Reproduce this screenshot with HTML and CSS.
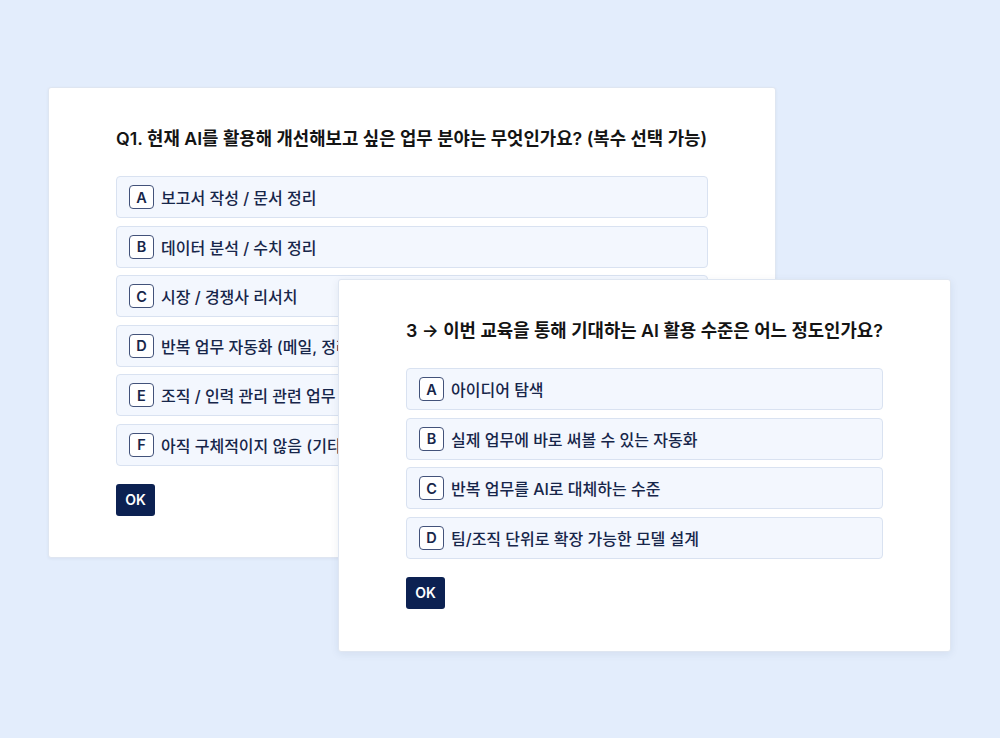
FILE: index.html
```html
<!DOCTYPE html>
<html lang="ko">
<head>
  <meta charset="UTF-8">
  <meta name="viewport" content="width=device-width, initial-scale=1.0">
  <title>AI 교육 사전 설문</title>
  <link rel="stylesheet" href="styles.css">
</head>
<body>
  <div class="stage">
    <!-- 첫 번째 설문 카드 -->
    <div class="card card-back">
      <h2 class="question">Q1. 현재 AI를 활용해 개선해보고 싶은 업무 분야는 무엇인가요? (복수 선택 가능)</h2>
      <div class="options">
        <div class="option"><span class="key">A</span> 보고서 작성 / 문서 정리</div>
        <div class="option"><span class="key">B</span> 데이터 분석 / 수치 정리</div>
        <div class="option"><span class="key">C</span> 시장 / 경쟁사 리서치</div>
        <div class="option"><span class="key">D</span> 반복 업무 자동화 (메일, 정리, 보고 등)</div>
        <div class="option"><span class="key">E</span> 조직 / 인력 관리 관련 업무</div>
        <div class="option"><span class="key">F</span> 아직 구체적이지 않음 (기타)</div>
      </div>
      <button class="ok-btn">OK</button>
    </div>

    <!-- 두 번째 설문 카드 -->
    <div class="card card-front">
      <h2 class="question">3 → 이번 교육을 통해 기대하는 AI 활용 수준은 어느 정도인가요?</h2>
      <div class="options">
        <div class="option"><span class="key">A</span> 아이디어 탐색</div>
        <div class="option"><span class="key">B</span> 실제 업무에 바로 써볼 수 있는 자동화</div>
        <div class="option"><span class="key">C</span> 반복 업무를 AI로 대체하는 수준</div>
        <div class="option"><span class="key">D</span> 팀/조직 단위로 확장 가능한 모델 설계</div>
      </div>
      <button class="ok-btn">OK</button>
    </div>
  </div>
</body>
</html>
```

FILE: styles.css
```css
body {
  margin: 0;
  background: #e3edfc;
  font-family: Inter, "Noto Sans CJK KR", sans-serif;
  color: #111;
}
.stage {
  position: relative;
  width: 1000px;
  height: 738px;
  overflow: hidden;
}
.card {
  position: absolute;
  box-sizing: border-box;
  background: #fff;
  border: 1px solid #dfe6f1;
  border-radius: 3px;
  padding: 39px 67px 40px;
}
.card-back {
  left: 48px;
  top: 87px;
  width: 728px;
  height: 471px;
  box-shadow: 0 1px 3px rgba(30, 50, 90, 0.06);
}
.card-front {
  left: 338px;
  top: 279px;
  width: 613px;
  height: 373px;
  box-shadow: 0 2px 8px rgba(30, 50, 90, 0.08);
}
.question {
  margin: 0 0 25px;
  font-size: 17.8px;
  line-height: 24px;
  font-weight: 600;
  color: #141414;
  white-space: nowrap;
}
.options {
  display: flex;
  flex-direction: column;
  gap: 7.6px;
}
.option {
  display: flex;
  align-items: center;
  gap: 7px;
  height: 42px;
  box-sizing: border-box;
  padding: 0 12px;
  background: #f3f7fe;
  border: 1px solid #d9e2f1;
  border-radius: 4px;
  font-size: 16px;
  font-weight: 500;
  color: #17264a;
  white-space: nowrap;
  overflow: hidden;
}
.key {
  display: inline-flex;
  align-items: center;
  justify-content: center;
  flex: none;
  width: 25px;
  height: 24px;
  box-sizing: border-box;
  border: 1px solid #42527a;
  border-radius: 4px;
  background: #fff;
  font-size: 14.5px;
  font-weight: 600;
  color: #17264a;
}
.ok-btn {
  display: block;
  margin-top: 18px;
  width: 39px;
  height: 32px;
  padding: 0;
  border: none;
  border-radius: 3px;
  background: #0c2152;
  color: #fff;
  font-family: Inter, "Noto Sans CJK KR", sans-serif;
  font-size: 14px;
  font-weight: 600;
}
```
